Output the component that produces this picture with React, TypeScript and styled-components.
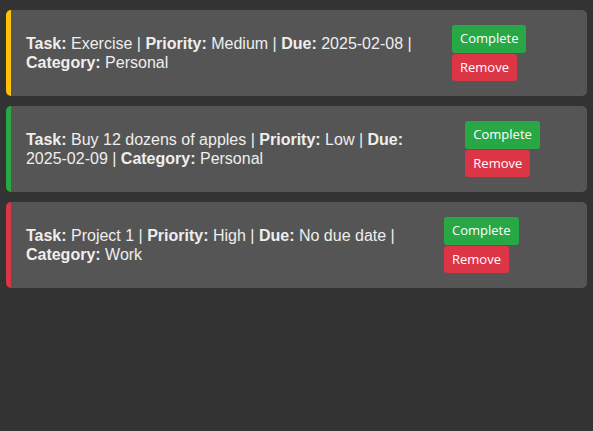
import React from 'react';
import styled, { createGlobalStyle } from 'styled-components';

type Priority = 'Low' | 'Medium' | 'High';

interface Task {
  id: number;
  title: string;
  priority: Priority;
  due: string;
  category: string;
}

const tasks: Task[] = [
  { id: 1, title: 'Exercise', priority: 'Medium', due: '2025-02-08', category: 'Personal' },
  { id: 2, title: 'Buy 12 dozens of apples', priority: 'Low', due: '2025-02-09', category: 'Personal' },
  { id: 3, title: 'Project 1', priority: 'High', due: 'No due date', category: 'Work' },
];

const priorityColors: Record<Priority, string> = {
  Low: '#28a745',
  Medium: '#ffc107',
  High: '#dc3545',
};

const GlobalStyle = createGlobalStyle`
  html, body {
    margin: 0;
    background: #333333;
  }

  body {
    font-family: 'Liberation Sans', Arial, sans-serif;
    color: #eeeeee;
  }
`;

export default function App() {
  return (
    <>
      <GlobalStyle />
      <TaskList>
        {tasks.map((task) => (
          <TaskItem key={task.id} priority={task.priority}>
            <TaskText>
              <b>Task:</b> {task.title} | <b>Priority:</b> {task.priority} |{' '}
              <b>Due:</b> {task.due} | <b>Category:</b> {task.category}
            </TaskText>
            <Actions>
              <ActionButton variant="complete">Complete</ActionButton>
              <ActionButton variant="remove">Remove</ActionButton>
            </Actions>
          </TaskItem>
        ))}
      </TaskList>
    </>
  );
}

const TaskList = styled.ul`
  list-style: none;
  width: 98%;
  margin: 10px auto;
  padding: 0;
`;

const TaskItem = styled.li<{ priority: Priority }>`
  display: flex;
  align-items: center;
  gap: 20px;
  background: #555555;
  border-left: 5px solid ${(p) => priorityColors[p.priority]};
  border-radius: 5px;
  padding: 15px;
  margin-bottom: 10px;
`;

const TaskText = styled.span`
  font-size: 16px;
  line-height: 19px;
`;

const Actions = styled.div`
  display: flex;
  flex-wrap: wrap;
  row-gap: 1px;
`;

const ActionButton = styled.button<{ variant: 'complete' | 'remove' }>`
  font-family: 'Open Sans', sans-serif;
  font-size: 13px;
  line-height: 17.5px;
  color: #ffffff;
  background: ${(p) => (p.variant === 'complete' ? '#28a745' : '#dc3545')};
  border: none;
  border-radius: 3px;
  padding: 5px 8px;
  margin-right: 9px;
  cursor: pointer;
`;
